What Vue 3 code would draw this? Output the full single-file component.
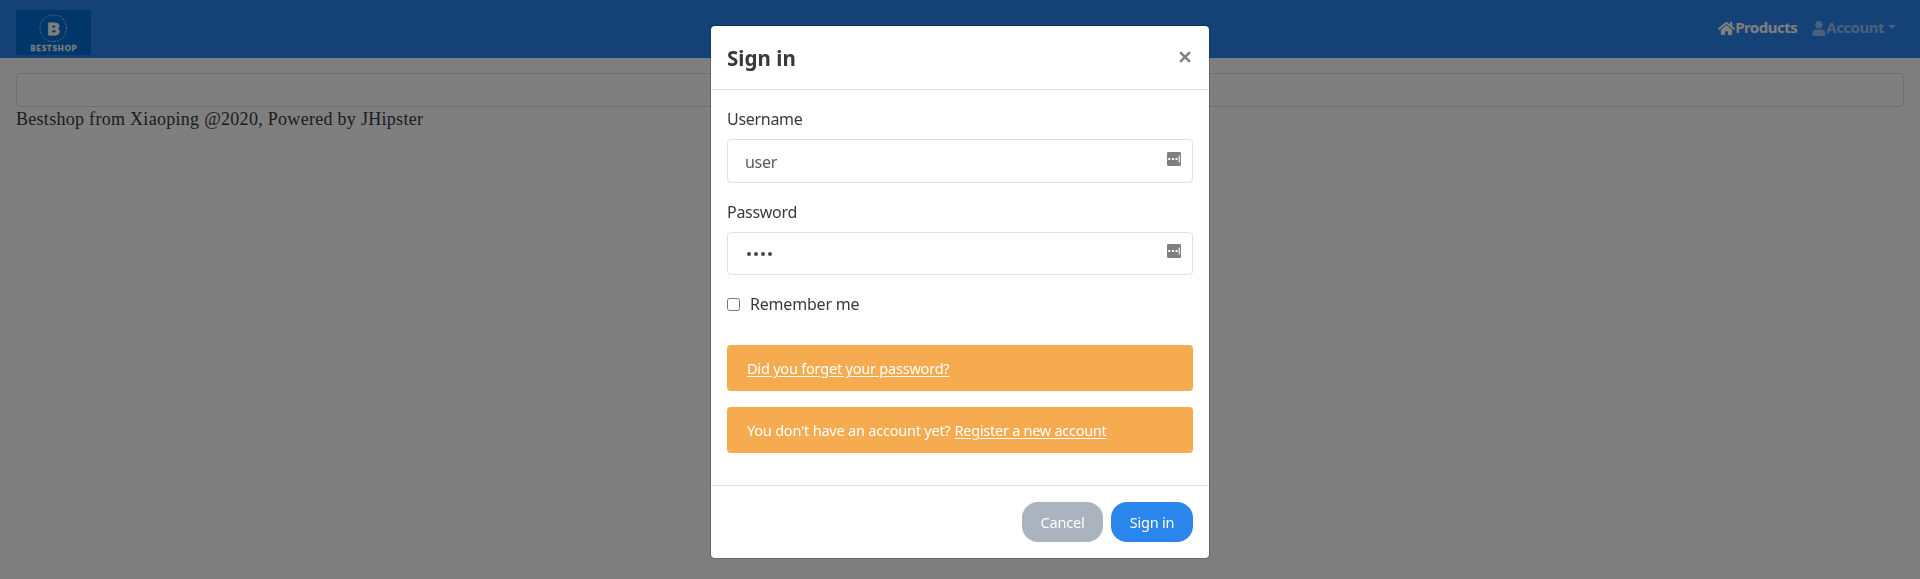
<script setup>
import { ref } from 'vue'

const username = ref('user')
const password = ref('pass')
const remember = ref(false)
</script>

<template>
  <div class="page">
    <header class="navbar">
      <svg class="logo" viewBox="0 0 75 45">
        <rect width="75" height="45" fill="#006ed6" />
        <circle cx="37.2" cy="18.2" r="13.3" fill="none" stroke="#fff" stroke-opacity=".7" stroke-width="1" stroke-dasharray="1.7 1.3" />
        <text class="logo-letter" x="37.4" y="24.6" text-anchor="middle" textLength="12.5" lengthAdjust="spacingAndGlyphs">B</text>
        <text class="logo-name" x="14.5" y="41" textLength="46" lengthAdjust="spacing">BESTSHOP</text>
      </svg>
      <nav class="links">
        <a class="link active">
          <svg class="home" viewBox="0 0 576 512"><path fill="currentColor" d="M280.37 148.26 96 300.11V464a16 16 0 0 0 16 16l112.060-.29a16 16 0 0 0 15.920-16V368a16 16 0 0 1 16-16h64a16 16 0 0 1 16 16v95.640a16 16 0 0 0 16 16.050L464 480a16 16 0 0 0 16-16V300L295.670 148.260a12.190 12.190 0 0 0-15.300 0zM571.600 251.470 488 182.560V44.050a12 12 0 0 0-12-12h-56a12 12 0 0 0-12 12v72.610L318.470 43a48 48 0 0 0-61 0L4.340 251.470a12 12 0 0 0-1.600 16.900l25.500 31A12 12 0 0 0 45.150 301l235.220-193.740a12.190 12.190 0 0 1 15.300 0L530.900 301a12 12 0 0 0 16.900-1.600l25.500-31a12 12 0 0 0-1.700-16.930z" /></svg>
          <span class="products">Products</span>
        </a>
        <a class="link">
          <svg class="user" viewBox="0 0 448 512"><path fill="currentColor" d="M224 256c70.700 0 128-57.300 128-128S294.700 0 224 0 96 57.300 96 128s57.300 128 128 128zm89.600 32h-16.700c-22.200 10.200-46.900 16-72.900 16s-50.600-5.800-72.900-16h-16.700C60.200 288 0 348.200 0 422.400V464c0 26.500 21.500 48 48 48h352c26.500 0 48-21.500 48-48v-41.600c0-74.200-60.200-134.400-134.400-134.400z" /></svg>
          <span class="account">Account</span>
          <i class="caret"></i>
        </a>
      </nav>
    </header>
    <main class="content">
      <div class="card"></div>
      <footer class="credit">Bestshop from Xiaoping @2020, Powered by JHipster</footer>
    </main>
  </div>

  <div class="backdrop">
    <section class="modal">
      <header class="modal-header">
        <h4>Sign in</h4>
        <svg class="close" viewBox="0 0 12 12"><path d="M1.8 1.8 10.200 10.200M10.200 1.800 1.800 10.200" stroke="#7f7f7f" stroke-width="2.500" stroke-linecap="round" /></svg>
      </header>
      <form class="modal-body" @submit.prevent>
        <label class="lbl lbl-user">Username</label>
        <div class="field">
          <input v-model="username" type="text" class="value" />
          <svg class="key" viewBox="0 0 14 14"><rect width="14" height="14" rx="1.300" fill="#7f7f7f" /><path d="M1.300 6h2v2h-2zM5 6h2v2H5zM8.500 6h2v2h-2zM11.700 3.500h1.100v7h-1.100z" fill="#fff" /></svg>
        </div>
        <label class="lbl lbl-pass">Password</label>
        <div class="field">
          <span class="dots"><i v-for="n in password.length" :key="n"></i></span>
          <svg class="key" viewBox="0 0 14 14"><rect width="14" height="14" rx="1.300" fill="#7f7f7f" /><path d="M1.300 6h2v2h-2zM5 6h2v2H5zM8.500 6h2v2h-2zM11.700 3.500h1.100v7h-1.100z" fill="#fff" /></svg>
        </div>
        <label class="check">
          <input v-model="remember" type="checkbox" />
          <span>Remember me</span>
        </label>
        <div class="alert"><a class="forgot">Did you forget your password?</a></div>
        <div class="alert"><span class="ask">You don't have an account yet?</span><a class="register">Register a new account</a></div>
      </form>
      <footer class="modal-footer">
        <button class="btn cancel">Cancel</button>
        <button class="btn submit">Sign in</button>
      </footer>
    </section>
  </div>
</template>

<style>
body {
  background: #fff;
  overflow: hidden;
}
</style>

<style scoped>
* {
  box-sizing: border-box;
}
.page,
.modal {
  font-family: "Noto Sans", "Open Sans", sans-serif;
  color: #373a3c;
}
.navbar {
  height: 58px;
  padding: 10px 24px 0 16px;
  background: #2a85ed;
  display: flex;
  justify-content: space-between;
  align-items: flex-start;
}
.logo {
  width: 75px;
  height: 45px;
}
.logo-letter {
  font: 900 17px Lato, sans-serif;
  fill: #fff;
  stroke: #fff;
  stroke-width: 1px;
}
.logo-name {
  font: 900 7.500px Lato, sans-serif;
  fill: #fff;
  stroke: #fff;
  stroke-width: .3px;
}
.links {
  display: flex;
  gap: 15px;
}
.link {
  display: flex;
  align-items: center;
  height: 36px;
  font-size: 15px;
  font-weight: 700;
  line-height: 34px;
  color: rgba(255, 255, 255, .5);
}
.link.active {
  color: #fff;
}
.home {
  width: 17px;
  height: 15px;
}
.user {
  width: 14px;
  height: 15px;
}
.products,
.account {
  height: 36px;
  letter-spacing: -.5px;
}
.caret {
  margin: 0 0 2px 4px;
  border: 4.500px solid transparent;
  border-top-color: currentColor;
  border-bottom: 0;
}
.content {
  padding: 15px 16px 0;
}
.card {
  height: 34px;
  border: 1px solid #dfdfdf;
  border-radius: 4px;
}
.credit {
  font: 18px/25px "Liberation Serif", serif;
  letter-spacing: .29px;
  white-space: nowrap;
}
.backdrop {
  position: fixed;
  inset: 0;
  display: flex;
  justify-content: center;
  align-items: flex-start;
  padding-top: 25px;
  background: rgba(0, 0, 0, .5);
}
.modal {
  width: 500px;
  height: 534px;
  display: flex;
  flex-direction: column;
  background: #fff;
  background-clip: padding-box;
  border: 1px solid rgba(0, 0, 0, .2);
  border-radius: 5px;
}
.modal-header {
  height: 64px;
  padding: 0 18px 0 16px;
  display: flex;
  justify-content: space-between;
  align-items: flex-start;
  border-bottom: 1px solid #dedede;
}
h4 {
  margin: 16px 0 0;
  font-size: 20.500px;
  font-weight: 700;
  line-height: 33px;
  letter-spacing: .05px;
}
.close {
  width: 12px;
  height: 12px;
  margin-top: 25px;
}
.modal-body {
  flex: 1;
  padding: 16px 16px 0;
}
.lbl {
  display: block;
  height: 33px;
  font-size: 16px;
  line-height: 27px;
  letter-spacing: -.3px;
}
.field {
  height: 44px;
  margin-bottom: 16px;
  padding: 0 11px 0 17px;
  display: flex;
  align-items: flex-start;
  justify-content: space-between;
  border: 1px solid #e1e1e1;
  border-radius: 4px;
}
.lbl-pass + .field {
  height: 43px;
}
.value {
  width: 200px;
  height: 42px;
  padding: 1px 0 0;
  border: 0;
  outline: 0;
  font: 16px "Noto Sans", sans-serif;
  letter-spacing: -.3px;
  color: #55595c;
}
.key {
  width: 14px;
  height: 14px;
  margin-top: 12px;
}
.lbl-pass + .field .key {
  margin-top: 11px;
}
.dots {
  display: flex;
  gap: 3px;
  padding: 19px 0 0 2px;
}
.dots i {
  width: 4px;
  height: 4px;
  border-radius: 50%;
  background: #45494e;
}
.check {
  display: flex;
  align-items: center;
  height: 26px;
  font-size: 16px;
  letter-spacing: -.2px;
}
.check input {
  width: 13px;
  height: 13px;
  margin: 0 10px 0 0;
}
.alert {
  height: 46px;
  margin-bottom: 16px;
  padding-left: 20px;
  display: flex;
  gap: 4px;
  font-size: 14.500px;
  line-height: 46px;
  white-space: nowrap;
  color: #fff;
  background: #f7ab50;
  border-radius: 4px;
}
.check + .alert {
  margin-top: 28px;
}
.forgot,
.register {
  text-decoration: underline;
  text-underline-offset: 2px;
}
.forgot,
.ask {
  letter-spacing: -.21px;
}
.register {
  letter-spacing: -.27px;
}
.modal-footer {
  height: 73px;
  padding: 16px;
  display: flex;
  justify-content: flex-end;
  gap: 8px;
  border-top: 1px solid #dedede;
}
.btn {
  width: 82px;
  height: 40px;
  padding: 0;
  border: 0;
  border-radius: 16px;
  font: 14.500px "Noto Sans", sans-serif;
  letter-spacing: -.2px;
  color: #fff;
}
.cancel {
  width: 81px;
  background: #abb4be;
}
.submit {
  background: #2a85ed;
}
</style>
